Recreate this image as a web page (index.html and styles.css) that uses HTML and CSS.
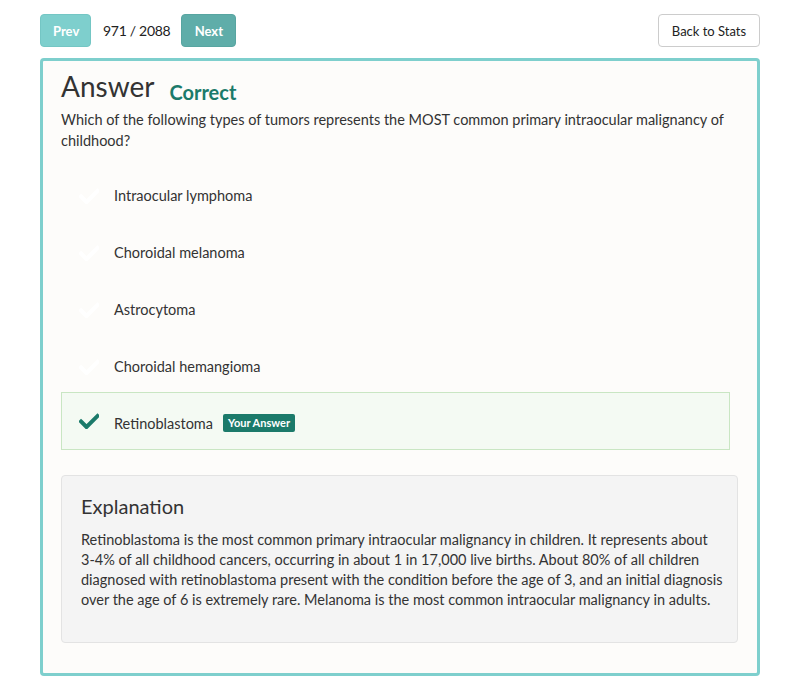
FILE: index.html
```html
<!DOCTYPE html>
<html>
<head>
<meta charset="utf-8">
<link rel="stylesheet" href="styles.css">
</head>
<body>
<div class="page">
  <div class="toolbar">
    <div class="nav">
      <button class="btn btn-prev">Prev</button>
      <span class="counter">971 / 2088</span>
      <button class="btn btn-next">Next</button>
    </div>
    <button class="btn btn-back">Back to Stats</button>
  </div>
  <div class="card">
    <div class="heading">
      <h1 class="title">Answer</h1>
      <span class="status">Correct</span>
    </div>
    <p class="question">Which of the following types of tumors represents the MOST common primary intraocular malignancy of childhood?</p>
    <ul class="options">
      <li class="option"><svg class="check faint" viewBox="0 0 20 16"><path d="M2 8.5 L7.5 14 L18.5 3" /></svg><span>Intraocular lymphoma</span></li>
      <li class="option"><svg class="check faint" viewBox="0 0 20 16"><path d="M2 8.5 L7.5 14 L18.5 3" /></svg><span>Choroidal melanoma</span></li>
      <li class="option"><svg class="check faint" viewBox="0 0 20 16"><path d="M2 8.5 L7.5 14 L18.5 3" /></svg><span>Astrocytoma</span></li>
      <li class="option"><svg class="check faint" viewBox="0 0 20 16"><path d="M2 8.5 L7.5 14 L18.5 3" /></svg><span>Choroidal hemangioma</span></li>
      <li class="option selected"><svg class="check" viewBox="0 0 20 16"><path d="M2 8.5 L7.5 14 L18.5 3" /></svg><span class="sel-text">Retinoblastoma</span><span class="badge">Your Answer</span></li>
    </ul>
    <div class="explanation">
      <h2 class="exp-title">Explanation</h2>
      <p class="exp-text">Retinoblastoma is the most common primary intraocular malignancy in children. It represents about 3-4% of all childhood cancers, occurring in about 1 in 17,000 live births. About 80% of all children diagnosed with retinoblastoma present with the condition before the age of 3, and an initial diagnosis over the age of 6 is extremely rare. Melanoma is the most common intraocular malignancy in adults.</p>
    </div>
  </div>
</div>
</body>
</html>
```

FILE: styles.css
```css
* { box-sizing: border-box; }
html, body { margin: 0; padding: 0; background: #ffffff; }
body {
  font-family: Lato, "Open Sans", sans-serif;
  color: #333333;
  font-size: 14.5px;
}
.page {
  width: 720px;
  margin-left: 40px;
  padding-top: 14px;
}
.toolbar {
  display: flex;
  justify-content: space-between;
  align-items: center;
  height: 33px;
}
.nav {
  display: flex;
  align-items: center;
}
.btn {
  font-family: Lato, sans-serif;
  height: 33px;
  border-radius: 4px;
  font-size: 13px;
  padding: 0 12px;
  cursor: pointer;
}
.btn-prev {
  width: 51px;
  background: #7ecfcd;
  border: 1px solid #74c6c4;
  color: #ffffff;
  font-weight: 700;
}
.btn-next {
  width: 55px;
  background: #5fada9;
  border: 1px solid #58a5a1;
  color: #ffffff;
  font-weight: 700;
}
.counter {
  font-size: 14px;
  margin: 0 11px 0 12px;
  color: #222;
  letter-spacing: -0.3px;
}
.btn-back {
  width: 102px;
  background: #ffffff;
  border: 1px solid #cccccc;
  color: #222;
  padding: 0;
}
.card {
  margin-top: 11px;
  border: 3px solid #7ecfcd;
  border-radius: 4px;
  background: #fdfcfa;
  padding: 6px 19px 30px 18px;
  height: 618px;
}
.heading {
  display: flex;
  align-items: baseline;
}
.title {
  margin: 0;
  font-size: 28px;
  font-weight: 400;
  color: #333;
  line-height: 38px;
}
.status {
  margin-left: 15px;
  font-size: 20px;
  font-weight: 700;
  color: #1b7a6a;
  position: relative;
  top: 3px;
}
.question {
  margin: 4px 0 0;
  line-height: 21px;
}
.options {
  list-style: none;
  margin: 16px 0 0;
  padding: 0;
}
.option {
  display: flex;
  align-items: center;
  height: 57px;
  padding-left: 17px;
  margin-right: 8px;
  border: 1px solid transparent;
}
.check {
  width: 20px;
  height: 16px;
  margin-right: 15px;
  fill: none;
  stroke: #1b7a6a;
  stroke-width: 4;
  stroke-linecap: square;
}
.check.faint { stroke: #ffffff; }
.option.selected {
  margin-top: -3px;
  height: 58px;
  background: #f4faf3;
  border: 1px solid #c9e6c3;
}
.sel-text {
  position: relative;
  top: 2px;
}
.badge {
  margin-left: 10px;
  background: #1b7a6a;
  color: #ffffff;
  font-size: 11px;
  font-weight: 700;
  padding: 2px 5px;
  border-radius: 2px;
  line-height: 14px;
  position: relative;
  top: 2px;
}
.explanation {
  margin-top: 25px;
  background: #f4f4f4;
  border: 1px solid #e3e3e3;
  border-radius: 4px;
  padding: 17px 14px 26px 19px;
  height: 168px;
}
.exp-title {
  margin: 0;
  font-size: 20px;
  font-weight: 400;
  line-height: 26px;
  color: #333;
}
.exp-text {
  margin: 11px 0 0;
  line-height: 20px;
}
```
